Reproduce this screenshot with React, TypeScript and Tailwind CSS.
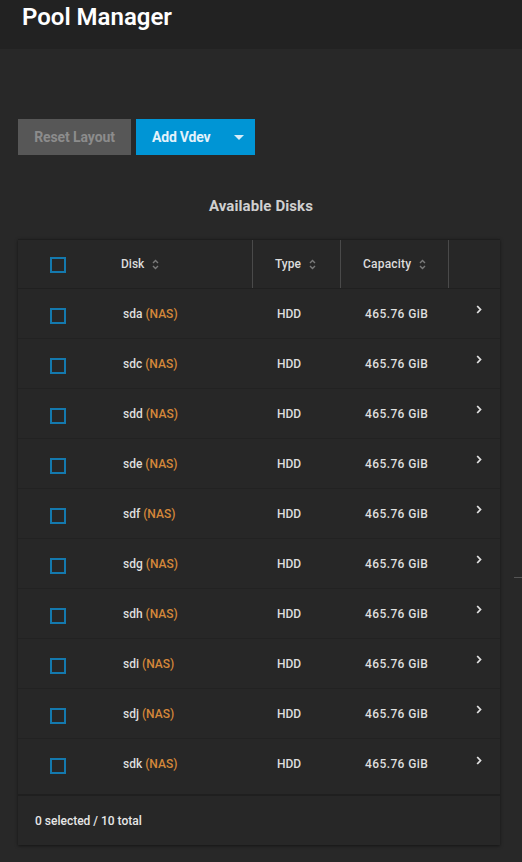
import React from "react";

const disks = ["sda", "sdc", "sdd", "sde", "sdf", "sdg", "sdh", "sdi", "sdj", "sdk"];

function Checkbox() {
  return <div className="w-[16px] h-[16px] border-2 border-[#1479ae] box-border" />;
}

function SortIcon() {
  return (
    <svg width="7" height="11" viewBox="0 0 7 11" className="ml-[8px]">
      <path d="M1 4 L3.5 1.5 L6 4" fill="none" stroke="#7a7a7a" strokeWidth="1.4" />
      <path d="M1 7 L3.5 9.5 L6 7" fill="none" stroke="#7a7a7a" strokeWidth="1.4" />
    </svg>
  );
}

function Chevron() {
  return (
    <svg width="6" height="9" viewBox="0 0 6 9">
      <path d="M1.2 1 L4.5 4.5 L1.2 8" fill="none" stroke="#e0e0e0" strokeWidth="1.8" />
    </svg>
  );
}

export default function App() {
  const grid = "grid grid-cols-[80px_155px_88px_108px_1fr]";
  return (
    <div
      className="relative w-[522px] h-[862px] bg-[#282828] overflow-hidden"
      style={{ fontFamily: "Roboto, 'Noto Sans', sans-serif" }}
    >
      <div className="h-[49px] bg-[#222222] pl-[22px] pt-[1px]">
        <h1 className="text-[24px] leading-[32px] font-semibold text-white">Pool Manager</h1>
      </div>

      <div className="px-[18px] pt-[70px]">
        <div className="flex gap-[5px]">
          <button className="w-[113px] h-[36px] bg-[#575757] text-[#8c8c8c] text-[14px] font-bold tracking-[-0.1px]">
            Reset Layout
          </button>
          <button className="w-[119px] h-[36px] bg-[#0095d5] text-[#e3f2fb] text-[14px] font-bold flex items-center pl-[16px] tracking-[-0.2px]">
            <span>Add Vdev</span>
            <svg width="10" height="5" viewBox="0 0 10 5" className="ml-[24px] mt-[1px]">
              <path d="M0 0 L10 0 L5 5 Z" fill="#d6ecf8" />
            </svg>
          </button>
        </div>

        <div className="mt-[42px] text-center text-[15px] font-bold text-[#d0d0d0] tracking-[0.1px] leading-[18px]">
          Available Disks
        </div>

        <div className="mt-[24px] w-[482px] bg-[#272727] border-t border-[#1e1e1e] shadow-[0_1px_3px_rgba(0,0,0,0.5)]">
          <div className={`${grid} h-[49px] border-b border-[#202020] text-[12px] font-medium text-[#dcdcdc]`}>
            <div className="flex items-center pl-[32px] pt-[2px]">
              <Checkbox />
            </div>
            <div className="flex items-center pl-[23px] border-r border-[#4a4a4a]">
              Disk
              <SortIcon />
            </div>
            <div className="flex items-center pl-[22px] border-r border-[#4a4a4a]">
              Type
              <SortIcon />
            </div>
            <div className="flex items-center pl-[22px] border-r border-[#4a4a4a] tracking-[0.2px]">
              Capacity
              <SortIcon />
            </div>
            <div />
          </div>

          {disks.map((d, i) => (
            <div
              key={d}
              className={`${grid} h-[50px] text-[12px] font-medium text-[#dedede] ${i < disks.length - 1 ? "border-b border-[#222222]" : ""}`}
            >
              <div className="flex items-center pl-[32px] pt-[4px]">
                <Checkbox />
              </div>
              <div className="flex items-center pl-[25px]">
                {d}&nbsp;<span className="text-[#d5873a]">(NAS)</span>
              </div>
              <div className="flex items-center pl-[24px]">HDD</div>
              <div className="flex items-center pl-[24px] tracking-[0.4px]">465.76 GiB</div>
              <div className="flex items-center pl-[27px] pb-[8px]">
                <Chevron />
              </div>
            </div>
          ))}

          <div className="mt-[5px] border-t-2 border-[#1f1f1f] h-[51px] flex items-center pl-[17px] pt-[1px] text-[12px] font-medium text-[#e6e6e6]">
            0 selected / 10 total
          </div>
        </div>
      </div>

      <div className="absolute right-0 top-[577px] w-[8px] h-[1px] bg-[#555555]" />
    </div>
  );
}
